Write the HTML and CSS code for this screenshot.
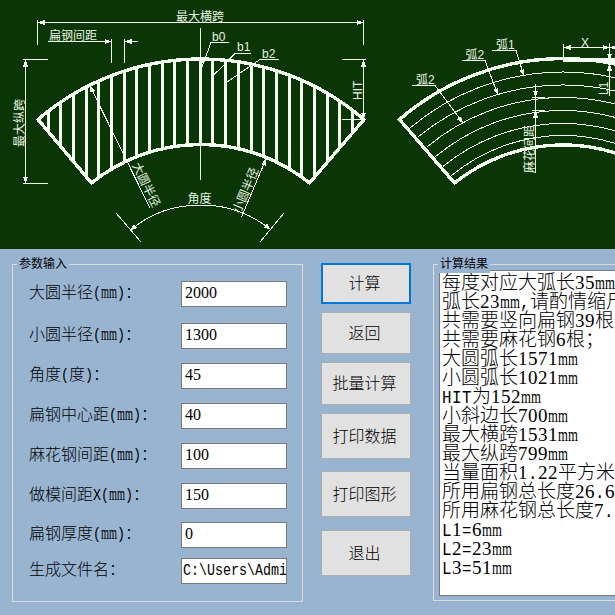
FILE: index.html
```html
<!DOCTYPE html>
<html lang="zh-CN">
<head>
<meta charset="utf-8">
<title>参数输入</title>
<link rel="stylesheet" href="styles.css">
</head>
<body>
<main class="window">
<svg class="drawing" width="615" height="249" viewBox="0 0 615 249">
  <defs>
    <marker id="arrow" viewBox="0 0 7 5" markerWidth="7" markerHeight="5" refX="6.5" refY="2.5" orient="auto-start-reverse" markerUnits="userSpaceOnUse"><path class="head" d="M0 0L7 2.5L0 5Z"/></marker>
    <clipPath id="sector"><path d="M38 120A249.8 249.8 0 0 1 364 120L309.500 184A173.500 173.500 0 0 0 91.500 184Z"/></clipPath>
  </defs>

  <!-- Fan with vertical bars -->
  <path class="bars" clip-path="url(#sector)" d="M48.500 50V190M60.500 50V190M73.500 50V190M86.500 50V190M98.500 50V190M111.500 50V190M124.500 50V190M136.500 50V190M149.500 50V190M162.500 50V190M174.500 50V190M187.500 50V190M200.500 50V190M212.500 50V190M225.500 50V190M238.500 50V190M251.500 50V190M263.500 50V190M276.500 50V190M289.500 50V190M301.500 50V190M314.500 50V190M327.500 50V190M339.500 50V190M352.500 50V190"/>
  <path class="outline" d="M38 119.500A249.800 249.800 0 0 1 364 119.500L309.500 183A173.500 173.500 0 0 0 91.500 183Z"/>
  <g class="thin">
    <path d="M37.500 20V45M363.500 20V45M200.500 28V180"/>
    <path class="both" d="M38 22.500H363"/>
    <path d="M48 41.500H110M126 41.500H138M111.500 39V63M124.500 39V63"/>
    <path class="end" d="M98 41.500H111"/><path class="end" d="M138 41.500H125"/>
    <path d="M23 59.500H48M23 183.500H48"/><path class="both" d="M25.500 60V183"/>
    <path d="M342 59.500H366M342 119.500H364"/><path class="both" d="M363.500 60V119"/>
    <path d="M229 42.500H211L202 67M251 53.500H235L214 75M279 59.500H260L227 82"/>
    <path d="M200 68L203 61M213 75L217 71M226 83L230 80"/>
    <path class="start" d="M90 86L150 208"/><path class="start" d="M266 159L241.500 217"/>
    <path class="both" d="M130.500 230.500Q159 205 201 205Q240 205 270.500 229.500"/>
    <path d="M116 213L141 242M284 213L260 242"/>
  </g>

  <!-- Fan with concentric arcs -->
  <g class="thin">
    <path d="M410 128A237 237 0 0 1 716 128M418 137A228 228 0 0 1 708 137M427 147A211.600 211.600 0 0 1 699 147M435 157A199.400 199.400 0 0 1 691 157M443 166.500A189 189 0 0 1 683 166.500M451 176A175 175 0 0 1 675 176"/>
    <path d="M563.500 44V60M535.500 84V173M609.500 43V96M532 97.500H545M532 110.500H545"/>
    <path class="both" d="M564 47.500H609"/><path class="start" d="M610 47.500H625"/>
    <path class="end" d="M535.500 84V97"/><path class="start" d="M535.500 111V121"/>
    <path class="end" d="M609.500 45V60"/><path class="start" d="M609.500 64V76"/>
    <path class="end" d="M492 50.500H516L524 76"/>
    <path class="end" d="M462 60.500H485L498 95"/>
    <path class="end" d="M412 85.500H435L463 123"/>
  </g>
  <path class="outline" d="M399.500 119.500A249.800 249.800 0 0 1 726.500 119.500L671.500 183A173.500 173.500 0 0 0 454.500 183Z"/>
  <path class="outline" d="M563 60H620"/>

  <g class="caption">
    <text x="176" y="21">最大横跨</text>
    <text x="49" y="40">扁钢间距</text>
    <text transform="translate(23.500 147) rotate(-90)">最大纵跨</text>
    <text x="187.500" y="202.500">角度</text>
    <text transform="translate(132 165) rotate(64)">大圆半径</text>
    <text transform="translate(240 214) rotate(-67)">小圆半径</text>
    <text x="212" y="41">b0</text>
    <text x="237" y="51">b1</text>
    <text x="262" y="58">b2</text>
    <text transform="translate(362 100) rotate(-90)">HIT</text>
    <text x="496" y="49">弧1</text>
    <text x="465.500" y="59">弧2</text>
    <text x="416" y="83.500">弧2</text>
    <text x="581" y="46.500">X</text>
    <text transform="translate(608 95) rotate(-90)">L1</text>
    <text transform="translate(534 173) rotate(-90)">麻花间距</text>
  </g>
</svg>

<section class="panel">
  <fieldset class="group inputs">
    <legend>参数输入</legend>
    <div class="fields">
      <label>大圆半径<span class="mono">(</span><span class="mm">mm</span><span class="mono">)</span>：</label><div class="box">2000</div>
      <label>小圆半径<span class="mono">(</span><span class="mm">mm</span><span class="mono">)</span>：</label><div class="box">1300</div>
      <label>角度<span class="mono">(</span>度<span class="mono">)</span>：</label><div class="box">45</div>
      <label>扁钢中心距<span class="mono">(</span><span class="mm">mm</span><span class="mono">)</span>：</label><div class="box">40</div>
      <label>麻花钢间距<span class="mono">(</span><span class="mm">mm</span><span class="mono">)</span>：</label><div class="box">100</div>
      <label>做模间距<span class="mono">X(</span><span class="mm">mm</span><span class="mono">)</span>：</label><div class="box">150</div>
      <label>扁钢厚度<span class="mono">(</span><span class="mm">mm</span><span class="mono">)</span>：</label><div class="box">0</div>
      <label>生成文件名：</label><div class="box"><span class="mono path">C:\Users\Admi</span></div>
    </div>
  </fieldset>

  <nav class="actions">
    <button class="primary">计算</button>
    <button>返回</button>
    <button>批量计算</button>
    <button>打印数据</button>
    <button>打印图形</button>
    <button>退出</button>
  </nav>

  <fieldset class="group results">
    <legend>计算结果</legend>
    <div class="list">
      <p>每度对应大弧长<span class="num">35</span><span class="mm">mm</span></p>
      <p>弧长<span class="num">23</span><span class="mm">mm</span><span class="mono">,</span>请酌情缩尺</p>
      <p>共需要竖向扁钢<span class="num">39</span>根</p>
      <p>共需要麻花钢<span class="num">6</span>根；</p>
      <p>大圆弧长<span class="num">1571</span><span class="mm">mm</span></p>
      <p>小圆弧长<span class="num">1021</span><span class="mm">mm</span></p>
      <p><span class="mono">HIT</span>为<span class="num">152</span><span class="mm">mm</span></p>
      <p>小斜边长<span class="num">700</span><span class="mm">mm</span></p>
      <p>最大横跨<span class="num">1531</span><span class="mm">mm</span></p>
      <p>最大纵跨<span class="num">799</span><span class="mm">mm</span></p>
      <p>当量面积<span class="num">1</span><span class="mono">.</span><span class="num">22</span>平方米</p>
      <p>所用扁钢总长度<span class="num">26</span><span class="mono">.</span><span class="num">6</span></p>
      <p>所用麻花钢总长度<span class="num">7</span><span class="mono">.</span></p>
      <p><span class="mono">L</span><span class="num">1</span><span class="mono">=</span><span class="num">6</span><span class="mm">mm</span></p>
      <p><span class="mono">L</span><span class="num">2</span><span class="mono">=</span><span class="num">23</span><span class="mm">mm</span></p>
      <p><span class="mono">L</span><span class="num">3</span><span class="mono">=</span><span class="num">51</span><span class="mm">mm</span></p>
    </div>
  </fieldset>
</section>
</main>
</body>
</html>
```
FILE: styles.css
```css
* { box-sizing: border-box; }
body { margin: 0; overflow: hidden; background: #99b4d1; }
.window { width: 615px; height: 615px; overflow: hidden; font: 300 16px "Liberation Serif", "Noto Sans CJK SC", serif; color: #000; }

.drawing { display: block; background: #0a3504; }
.drawing path { fill: none; stroke: #f5fff2; shape-rendering: crispEdges; }
.drawing .bars { stroke-width: 3; }
.drawing .outline { stroke-width: 3.4; }
.drawing .head { fill: #f5fff2; stroke: none; }
.both { marker-start: url(#arrow); marker-end: url(#arrow); }
.start { marker-start: url(#arrow); }
.end { marker-end: url(#arrow); }
.caption { fill: #e6f3e2; font: 400 12px "Liberation Sans", "Noto Sans CJK SC", sans-serif; }

.panel { display: flex; align-items: flex-start; height: 366px; padding: 15px 0 0 12px; background: #99b4d1; }
.group { position: relative; min-width: 0; margin: 0; padding: 0; border: 1px solid #dcdcdc; flex: none; }
.group legend { position: absolute; top: -10px; left: 4px; padding: 0 2px; background: #99b4d1; font-size: 12px; font-weight: 400; line-height: 18px; white-space: nowrap; }
.inputs { width: 291px; height: 338px; }
.fields { display: grid; grid-template-columns: 152px 106px; grid-template-rows: 42px 40px 40px 40px 40px 39px 36px 26px; padding: 16px 0 0 16px; }
.fields label { height: 24px; line-height: 24px; white-space: nowrap; }
.box { height: 26px; padding-left: 3px; border: 1px solid #7a7a7a; background: #fff; line-height: 22px; overflow: hidden; white-space: nowrap; }

.mono { display: inline-block; font-family: "Liberation Mono", monospace; font-size: .8333em; line-height: 1; transform: scaleY(1.25); transform-origin: 50% 78%; }
.path { margin-left: -2px; }
.mm { display: inline-block; width: 1em; line-height: 1; transform: scale(.643, 1.15); transform-origin: 0 80%; white-space: nowrap; }

.actions { display: flex; flex-direction: column; width: 90px; margin: -1px 0 0 18px; flex: none; }
.actions button { width: 90px; height: 46px; margin: 0; padding: 0 3px 3px 0; border: 1px solid #adadad; border-radius: 0; background: #e1e1e1; color: #000; font: 300 16px "Noto Sans CJK SC", sans-serif; line-height: 24px; white-space: nowrap; }
.actions .primary { height: 41px; border: 2px solid #0078d7; }
.actions button:nth-child(2) { height: 42px; margin-top: 8px; }
.actions button:nth-child(3) { height: 43px; margin-top: 8px; }
.actions button:nth-child(4) { margin-top: 8px; }
.actions button:nth-child(5) { margin-top: 12px; }
.actions button:nth-child(6) { margin-top: 13px; }

.results { width: 240px; height: 337px; margin-left: 22px; }
.list { width: 220px; height: 326px; margin: 5px 0 0 5px; padding: 2px 0 0 2px; border: 1px solid #7a7a7a; background: #fff; font-size: 19px; overflow: hidden; }
.list p { height: 19px; margin: 0; line-height: 19px; white-space: nowrap; }
.list .num, .list .mono { letter-spacing: .5px; }
.list .mono { transform: scaleY(1.15); }
.list .mm { width: 20px; transform: scaleX(.67); }
```
